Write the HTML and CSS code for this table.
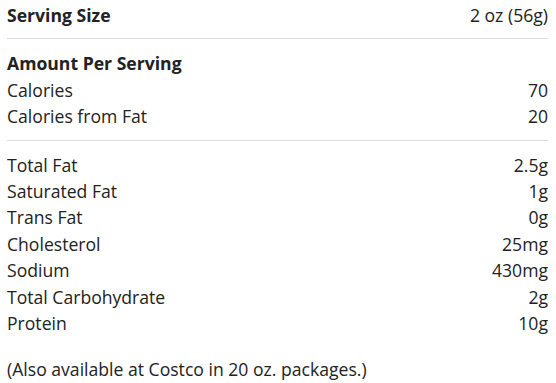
FILE: index.html
```html
<!DOCTYPE html>
<html lang="en">
<head>
    <meta charset="UTF-8">
    <meta name="viewport" content="width=device-width, initial-scale=1.0">
    <title>Nutrition Facts</title>
    <link rel="stylesheet" href="styles.css">
</head>
<body>
    <div class="facts">
        <!-- Serving size -->
        <div class="section first">
            <div class="row bold">
                <span>Serving Size</span>
                <span class="value">2 oz (56g)</span>
            </div>
        </div>

        <!-- Calories -->
        <div class="section">
            <div class="row bold">
                <span>Amount Per Serving</span>
            </div>
            <div class="row">
                <span>Calories</span>
                <span class="value">70</span>
            </div>
            <div class="row">
                <span>Calories from Fat</span>
                <span class="value">20</span>
            </div>
        </div>

        <!-- Nutrients -->
        <div class="section last">
            <div class="row"><span>Total Fat</span><span class="value">2.5g</span></div>
            <div class="row"><span>Saturated Fat</span><span class="value">1g</span></div>
            <div class="row"><span>Trans Fat</span><span class="value">0g</span></div>
            <div class="row"><span>Cholesterol</span><span class="value">25mg</span></div>
            <div class="row"><span>Sodium</span><span class="value">430mg</span></div>
            <div class="row"><span>Total Carbohydrate</span><span class="value">2g</span></div>
            <div class="row"><span>Protein</span><span class="value">10g</span></div>
        </div>

        <p class="note">(Also available at Costco in 20 oz. packages.)</p>
    </div>
</body>
</html>
```

FILE: styles.css
```css
body {
    font-family: "Open Sans", Arial, sans-serif;
    font-size: 17.6px;
    line-height: 26.4px;
    color: #222;
    background-color: #fff;
    margin: 0;
    padding: 0;
}
.facts {
    padding: 2px 8px 0 7px;
}
.section {
    padding: 11px 0 10px;
    border-bottom: 1px solid #ddd;
}
.section.first {
    padding-top: 0;
}
.section.last {
    border-bottom: none;
    padding-bottom: 0;
}
.row {
    display: flex;
    justify-content: space-between;
}
.bold {
    font-weight: bold;
}
.row.bold .value {
    font-weight: normal;
}
.note {
    margin: 20px 0 0;
}
```
